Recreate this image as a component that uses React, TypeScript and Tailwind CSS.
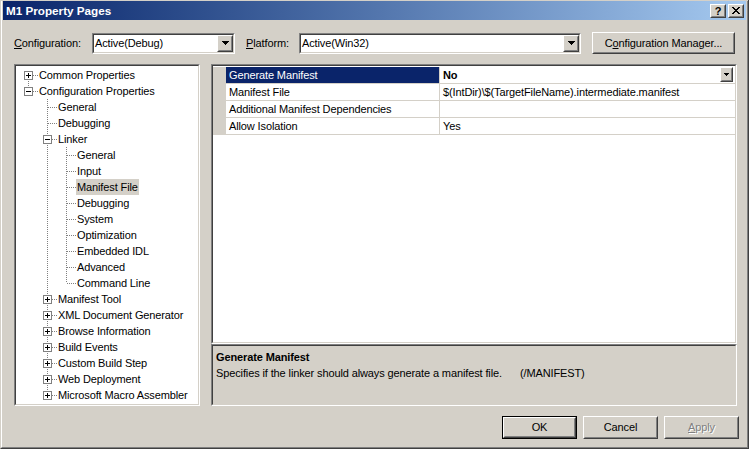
import React from 'react';

type TNode = { label: string; kids?: TNode[]; closed?: boolean; sel?: boolean };

const leaf = (label: string, sel = false): TNode => ({ label, sel });
const shut = (label: string): TNode => ({ label, kids: [leaf('x')], closed: true });

const TREE: TNode[] = [
  shut('Common Properties'),
  {
    label: 'Configuration Properties',
    kids: [
      leaf('General'),
      leaf('Debugging'),
      {
        label: 'Linker',
        kids: [
          leaf('General'),
          leaf('Input'),
          leaf('Manifest File', true),
          leaf('Debugging'),
          leaf('System'),
          leaf('Optimization'),
          leaf('Embedded IDL'),
          leaf('Advanced'),
          leaf('Command Line'),
        ],
      },
      shut('Manifest Tool'),
      shut('XML Document Generator'),
      shut('Browse Information'),
      shut('Build Events'),
      shut('Custom Build Step'),
      shut('Web Deployment'),
      shut('Microsoft Macro Assembler'),
    ],
  },
];

type Flat = { node: TNode; anc: boolean[]; last: boolean; first: boolean };

function flatten(nodes: TNode[], anc: boolean[], out: Flat[]) {
  nodes.forEach((n, i) => {
    const last = i === nodes.length - 1;
    out.push({ node: n, anc, last, first: anc.length === 0 && i === 0 });
    if (n.kids && !n.closed) flatten(n.kids, [...anc, last], out);
  });
  return out;
}

const FLAT = flatten(TREE, [], []);

function Raised({ className = '', children }: { className?: string; children?: React.ReactNode }) {
  return (
    <div className={`border border-t-white border-l-white border-r-[#404040] border-b-[#404040] bg-[#d4d0c8] ${className}`}>
      <div className="w-full h-full border border-t-[#d4d0c8] border-l-[#d4d0c8] border-r-[#808080] border-b-[#808080] flex items-center justify-center">
        {children}
      </div>
    </div>
  );
}

function Sunken({ className = '', inner = '', children }: { className?: string; inner?: string; children?: React.ReactNode }) {
  return (
    <div className={`border border-t-[#808080] border-l-[#808080] border-r-white border-b-white ${className}`}>
      <div className={`w-full h-full border border-t-[#404040] border-l-[#404040] border-r-[#d4d0c8] border-b-[#d4d0c8] ${inner}`}>
        {children}
      </div>
    </div>
  );
}

function Arrow({ small = false }: { small?: boolean }) {
  return small ? (
    <svg width="5" height="3" viewBox="0 0 5 3" shapeRendering="crispEdges">
      <polygon points="0,0 5,0 2.5,3" fill="#000" />
    </svg>
  ) : (
    <svg width="7" height="4" viewBox="0 0 7 4" shapeRendering="crispEdges">
      <polygon points="0,0 7,0 3.5,4" fill="#000" />
    </svg>
  );
}

function Combo({ className, text }: { className: string; text: string }) {
  return (
    <Sunken className={className} inner="bg-white flex">
      <span className="flex-1 pl-[1px] leading-[17px] text-black whitespace-nowrap">{text}</span>
      <Raised className="w-[16px] h-full">
        <Arrow />
      </Raised>
    </Sunken>
  );
}

function Guide() {
  return (
    <svg width="19" height="16" className="shrink-0" shapeRendering="crispEdges">
      <line x1="9.5" y1="0" x2="9.5" y2="16" stroke="#808080" strokeDasharray="1 1" />
    </svg>
  );
}

function Connector({ f }: { f: Flat }) {
  const has = !!f.node.kids;
  return (
    <svg width="19" height="16" className="shrink-0" shapeRendering="crispEdges">
      {!f.first && <line x1="9.5" y1="0" x2="9.5" y2="8" stroke="#808080" strokeDasharray="1 1" />}
      {!f.last && <line x1="9.5" y1="8" x2="9.5" y2="16" stroke="#808080" strokeDasharray="1 1" />}
      <line x1="10" y1="8.5" x2="19" y2="8.5" stroke="#808080" strokeDasharray="1 1" />
      {has && (
        <g>
          <rect x="5.5" y="4.5" width="8" height="8" fill="#fff" stroke="#808080" />
          <line x1="7" y1="8.5" x2="12" y2="8.5" stroke="#000" />
          {f.node.closed && <line x1="9.5" y1="6" x2="9.5" y2="11" stroke="#000" />}
        </g>
      )}
    </svg>
  );
}

const ROWS = [
  { name: 'Generate Manifest', value: 'No', sel: true },
  { name: 'Manifest File', value: '$(IntDir)\\$(TargetFileName).intermediate.manifest' },
  { name: 'Additional Manifest Dependencies', value: '' },
  { name: 'Allow Isolation', value: 'Yes' },
];

export default function App() {
  return (
    <div className="w-[749px] h-[449px] bg-[#d4d0c8] pt-[1px] border-l border-r border-b border-l-[#d4d0c8] border-r-[#404040] border-b-[#404040] font-['Liberation_Sans',Arial,sans-serif] text-[11px] tracking-[-0.12px] text-black select-none overflow-hidden">
      <div className="h-full border-l border-r border-b border-l-white border-r-[#808080] border-b-[#808080] px-[1px] pb-[1px] flex flex-col">
        {/* Title bar */}
        <div className="h-[19px] shrink-0 bg-linear-to-r from-[#0a246a] to-[#a6caf0] flex items-center pl-[3px] pr-[2px]">
          <span className="flex-1 text-white font-bold text-[11.7px] tracking-normal leading-[19px]">M1 Property Pages</span>
          <Raised className="w-[16px] h-[14px]">
            <span className="font-bold text-[11px] leading-[10px] text-black">?</span>
          </Raised>
          <Raised className="w-[16px] h-[14px] ml-[2px]">
            <svg width="8" height="7" viewBox="0 0 8 7" shapeRendering="crispEdges">
              <path d="M0 0h2v1h-2zM6 0h2v1h-2zM1 1h2v1h-2zM5 1h2v1h-2zM2 2h4v1h-4zM3 3h2v1h-2zM2 4h4v1h-4zM1 5h2v1h-2zM5 5h2v1h-2zM0 6h2v1h-2zM6 6h2v1h-2z" fill="#000" />
            </svg>
          </Raised>
        </div>

        <div className="flex-1 flex flex-col pl-[11px] pr-[7px]">
          {/* Config row */}
          <div className="mt-[12px] h-[22px] flex items-center shrink-0">
            <span className="w-[78px]">
              <span className="underline">C</span>onfiguration:
            </span>
            <Combo className="w-[143px] h-[21px]" text="Active(Debug)" />
            <span className="ml-[11px] w-[53px]">
              <span className="underline">P</span>latform:
            </span>
            <Combo className="w-[282px] h-[21px]" text="Active(Win32)" />
            <Raised className="ml-[11px] w-[143px] h-[22px]">
              <span>
                C<span className="underline">o</span>nfiguration Manager...
              </span>
            </Raised>
          </div>

          {/* Main area */}
          <div className="mt-[10px] h-[342px] flex shrink-0">
            <Sunken className="w-[186px] h-full" inner="bg-white pt-[1px] pl-[3px] overflow-hidden">
              {FLAT.map((f, i) => (
                <div key={i} className="h-[16px] flex items-center">
                  {f.anc.map((a, j) => (a ? <div key={j} className="w-[19px] h-[16px] shrink-0" /> : <Guide key={j} />))}
                  <Connector f={f} />
                  <span
                    className={`h-[16px] leading-[16px] px-[1px] whitespace-nowrap ${f.node.sel ? 'bg-[#d4d0c8]' : ''}`}
                  >
                    {f.node.label}
                  </span>
                </div>
              ))}
            </Sunken>

            <div className="ml-[11px] w-[526px] h-full flex flex-col">
              <Sunken className="h-[280px]" inner="bg-white pt-[1px]">
                {ROWS.map((r, i) => (
                  <div key={i} className="h-[17px] flex">
                    <div className="w-[13px] h-full bg-[#d4d0c8] shrink-0" />
                    <div
                      className={`w-[214px] shrink-0 h-full border-b border-r border-[#d4d0c8] pl-[3px] leading-[16px] whitespace-nowrap ${r.sel ? 'bg-[#0a246a] text-white' : ''}`}
                    >
                      {r.name}
                    </div>
                    <div className="flex-1 h-full border-b border-[#d4d0c8] pl-[3px] leading-[16px] flex whitespace-nowrap">
                      <span className={`flex-1 ${r.sel ? 'font-bold' : ''}`}>{r.value}</span>
                      {r.sel && (
                        <Raised className="w-[13px] h-[15px] mr-[2px]">
                          <Arrow small />
                        </Raised>
                      )}
                    </div>
                  </div>
                ))}
              </Sunken>
              <Sunken className="h-[62px]" inner="bg-[#d4d0c8] pt-[3px] pl-[3px] leading-[16px]">
                <div className="font-bold">Generate Manifest</div>
                <div className="whitespace-nowrap">
                  Specifies if the linker should always generate a manifest file.
                  <span className="ml-[18px]">(/MANIFEST)</span>
                </div>
              </Sunken>
            </div>
          </div>

          {/* Bottom buttons */}
          <div className="mt-[10px] flex justify-end gap-[6px] shrink-0">
            <div className="w-[75px] h-[23px] border border-black">
              <Raised className="w-full h-full">
                <span>OK</span>
              </Raised>
            </div>
            <Raised className="w-[75px] h-[23px]">
              <span>Cancel</span>
            </Raised>
            <Raised className="w-[75px] h-[23px]">
              <span className="text-[#808080] [text-shadow:1px_1px_0_#ffffff]">
                <span className="underline">A</span>pply
              </span>
            </Raised>
          </div>
        </div>
      </div>
    </div>
  );
}
